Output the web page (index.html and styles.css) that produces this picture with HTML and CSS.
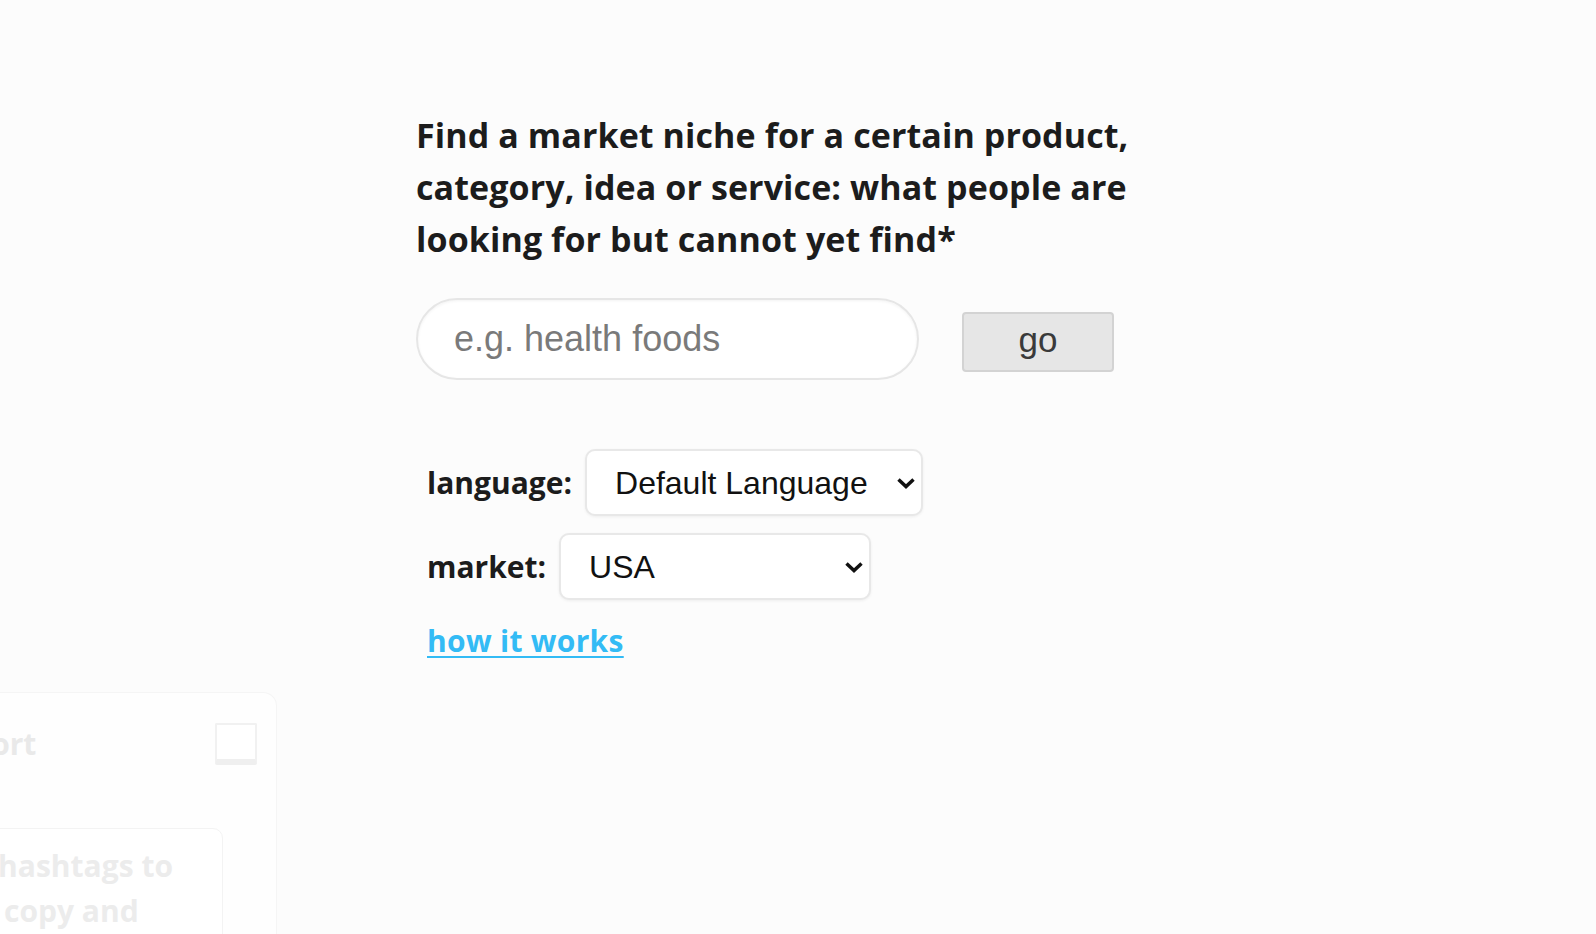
FILE: index.html
```html
<!DOCTYPE html>
<html lang="en">
<head>
  <meta charset="UTF-8" />
  <meta name="viewport" content="width=device-width, initial-scale=1.0" />
  <title>Market niche finder</title>
  <link rel="stylesheet" href="styles.css">
</head>
<body>
  <div class="container">
    <h1 class="title">Find a market niche for a certain product, category, idea or service: what people are looking for but cannot yet find*</h1>

    <!-- search -->
    <form class="search" onsubmit="return false">
      <input type="text" class="query" placeholder="e.g. health foods" />
      <button type="submit" class="go">go</button>
    </form>

    <!-- options -->
    <div class="options">
      <div class="field">
        <label for="lang">language:</label>
        <span class="select-wrap">
          <select id="lang" class="lang">
            <option>Default Language</option>
          </select>
          <svg class="chevron" width="20" height="12" viewBox="0 0 20 12"><path d="M2.5 2.5 L10 9.5 L17.5 2.5" /></svg>
        </span>
      </div>
      <div class="field">
        <label for="market">market:</label>
        <span class="select-wrap">
          <select id="market" class="market">
            <option>USA</option>
          </select>
          <svg class="chevron" width="20" height="12" viewBox="0 0 20 12"><path d="M2.5 2.5 L10 9.5 L17.5 2.5" /></svg>
        </span>
      </div>
      <a class="how" href="#">how it works</a>
    </div>
  </div>

  <!-- side panel, slid out -->
  <aside class="panel">
    <div class="panel-head">
      <span class="panel-title">Export</span>
      <span class="panel-box"></span>
    </div>
    <div class="panel-card">Find hashtags to then copy and paste</div>
  </aside>
</body>
</html>
```

FILE: styles.css
```css
/* Global styles */
* {
  box-sizing: border-box;
}
body {
  margin: 0;
  font-family: 'Open Sans', 'Noto Sans', sans-serif;
  background-color: #fcfcfc;
  color: #1c1c1c;
  overflow: hidden;
}
.container {
  width: 764px;
  margin: 0 auto;
  padding-top: 109px;
}
.title {
  margin: 0;
  font-size: 34px;
  font-weight: 700;
  line-height: 52px;
  letter-spacing: 0.1px;
}

/* search row */
.search {
  display: flex;
  align-items: center;
  margin-top: 33px;
}
.query {
  width: 503px;
  height: 82px;
  padding: 0 20px 0 36px;
  font-family: 'Liberation Sans', Arial, sans-serif;
  font-size: 36px;
  color: #333;
  background-color: #fff;
  border: 2px solid #e6e6e6;
  border-radius: 41px;
  box-shadow: inset 0 1px 3px rgba(0, 0, 0, 0.05);
  outline: none;
}
.query::placeholder {
  color: #7a7a7a;
}
.go {
  width: 152px;
  height: 60px;
  margin: 6px 0 0 43px;
  padding: 0 0 5px;
  font-family: 'Liberation Sans', Arial, sans-serif;
  font-size: 35px;
  color: #3a3a3a;
  background-color: #e6e6e6;
  border: 2px solid #d3d3d3;
  border-radius: 4px;
  cursor: pointer;
}

/* options */
.options {
  display: flex;
  flex-direction: column;
  align-items: flex-start;
  gap: 17px;
  margin-top: 69px;
  padding-left: 11px;
}
.field {
  display: flex;
  align-items: center;
  gap: 13px;
}
.field label {
  font-size: 30px;
  font-weight: 700;
  line-height: 42px;
}
.select-wrap {
  position: relative;
  display: block;
}
.select-wrap select {
  display: block;
  height: 67px;
  padding: 0 40px 0 28px;
  font-family: 'Liberation Sans', Arial, sans-serif;
  font-size: 32px;
  color: #111;
  background-color: #fff;
  border: 2px solid #e8e8e8;
  border-radius: 10px;
  box-shadow: 0 1px 3px rgba(0, 0, 0, 0.06);
  appearance: none;
  -webkit-appearance: none;
  outline: none;
}
.lang {
  width: 338px;
}
.market {
  width: 312px;
}
.chevron {
  position: absolute;
  right: 7px;
  top: 50%;
  margin-top: -6px;
  pointer-events: none;
}
.chevron path {
  fill: none;
  stroke: #111;
  stroke-width: 3.5;
}
.how {
  margin-top: 3px;
  font-size: 30px;
  font-weight: 700;
  line-height: 42px;
  letter-spacing: 0.3px;
  color: #33bbf5;
  text-decoration: underline;
  text-decoration-thickness: 2px;
  text-underline-offset: 4px;
}

/* faded side panel */
.panel {
  position: absolute;
  left: -110px;
  top: 692px;
  bottom: 0;
  width: 387px;
  padding-left: 14px;
  overflow: hidden;
  background-color: #fefefe;
  border: 1px solid #f5f5f5;
  border-bottom: none;
  border-radius: 0 14px 0 0;
}
.panel-head {
  display: flex;
  justify-content: space-between;
  align-items: center;
  height: 42px;
  margin-top: 30px;
  padding: 0 19px 0 33px;
}
.panel-title {
  font-size: 30px;
  font-weight: 700;
  line-height: 42px;
  color: #e9e9e9;
}
.panel-box {
  width: 42px;
  height: 42px;
  border: 2px solid #f1f1f1;
  border-bottom: 6px solid #efefef;
  border-radius: 2px;
  background-color: #fff;
}
.panel-card {
  width: 318px;
  margin-top: 63px;
  padding: 14px 20px;
  font-size: 30px;
  font-weight: 700;
  line-height: 45px;
  color: #ececec;
  background-color: #fff;
  border: 1px solid #f3f3f3;
  border-radius: 10px;
}
```
